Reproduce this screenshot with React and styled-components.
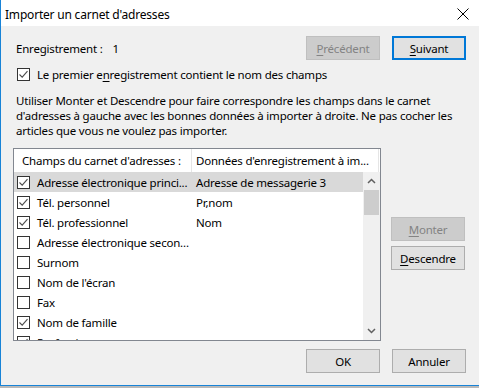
import React from "react";
import styled, { createGlobalStyle } from "styled-components";

const GlobalStyle = createGlobalStyle`
  html, body {
    margin: 0;
    padding: 0;
    background: #c8c8c8;
  }
  body {
    font-family: "Noto Sans", "Open Sans", sans-serif;
    font-size: 11.5px;
    letter-spacing: -0.2px;
    color: #000;
  }
`;

const fields = [
  { name: "Adresse électronique princi...", value: "Adresse de messagerie 3", checked: true, selected: true },
  { name: "Tél. personnel", value: "Pr,nom", checked: true },
  { name: "Tél. professionnel", value: "Nom", checked: true },
  { name: "Adresse électronique secon...", value: "", checked: false },
  { name: "Surnom", value: "", checked: false },
  { name: "Nom de l'écran", value: "", checked: false },
  { name: "Fax", value: "", checked: false },
  { name: "Nom de famille", value: "", checked: true },
  { name: "Profession", value: "", checked: true },
];

const CheckBox = ({ checked }) => (
  <Box>
    {checked && (
      <svg width="11" height="11" viewBox="0 0 11 11">
        <polyline points="1.5,5.5 4.2,8.2 9.5,2.2" fill="none" stroke="#4d4d4d" strokeWidth="1.1" />
      </svg>
    )}
  </Box>
);

const App = () => {
  return (
    <>
      <GlobalStyle />
      <Window>
        <TitleBar>
          <Title>Importer un carnet d'adresses</Title>
          <CloseIcon width="12" height="12" viewBox="0 0 12 12">
            <line x1="0.5" y1="0.5" x2="11.5" y2="11.5" stroke="#000" strokeWidth="1" />
            <line x1="11.5" y1="0.5" x2="0.5" y2="11.5" stroke="#000" strokeWidth="1" />
          </CloseIcon>
        </TitleBar>
        <Body>
          <TopRow>
            <RecordLabel>
              Enregistrement :<RecordNum>1</RecordNum>
            </RecordLabel>
            <ButtonGroup>
              <Button disabled>
                <u>P</u>récédent
              </Button>
              <Button $default>
                <u>S</u>uivant
              </Button>
            </ButtonGroup>
          </TopRow>

          <CheckRow>
            <CheckBox checked />
            <span>
              Le premier e<u>n</u>registrement contient le nom des champs
            </span>
          </CheckRow>

          <Info>
            Utiliser Monter et Descendre pour faire correspondre les champs dans le carnet
            <br />
            d'adresses à gauche avec les bonnes données à importer à droite. Ne pas cocher les
            <br />
            articles que vous ne voulez pas importer.
          </Info>

          <Middle>
            <ListBox>
              <Header>
                <HeaderCell $width={178}>Champs du carnet d'adresses :</HeaderCell>
                <HeaderCell $width={187}>Données d'enregistrement à im...</HeaderCell>
              </Header>
              <ListBody>
                <Rows>
                  {fields.map((f) => (
                    <Row key={f.name} $selected={f.selected}>
                      <NameCell>
                        <CheckBox checked={f.checked} />
                        <span>{f.name}</span>
                      </NameCell>
                      <ValueCell>{f.value}</ValueCell>
                    </Row>
                  ))}
                </Rows>
                <ScrollBar>
                  <Arrow width="9" height="6" viewBox="0 0 9 6">
                    <polyline points="1,5 4.5,1.5 8,5" fill="none" stroke="#606060" strokeWidth="1.5" />
                  </Arrow>
                  <Thumb />
                  <Track />
                  <Arrow width="9" height="6" viewBox="0 0 9 6">
                    <polyline points="1,1 4.5,4.5 8,1" fill="none" stroke="#606060" strokeWidth="1.5" />
                  </Arrow>
                </ScrollBar>
              </ListBody>
            </ListBox>
            <SideButtons>
              <Button disabled>
                <u>M</u>onter
              </Button>
              <Button>
                <u>D</u>escendre
              </Button>
            </SideButtons>
          </Middle>

          <Footer>
            <Button>OK</Button>
            <Button>Annuler</Button>
          </Footer>
        </Body>
      </Window>
      <Desktop />
    </>
  );
};

const Window = styled.div`
  width: 478px;
  height: 385px;
  border-left: 1px solid #1883d7;
  border-bottom: 1px solid #1883d7;
  display: flex;
  flex-direction: column;
  background: #f0f0f0;
  overflow: hidden;
`;

const Desktop = styled.div`
  height: 2px;
  background: #b9b9b9;
`;

const TitleBar = styled.div`
  height: 26px;
  flex-shrink: 0;
  background: #fff;
  display: flex;
  align-items: center;
  justify-content: space-between;
  padding: 0 10px 0 4px;
`;

const Title = styled.span`
  font-size: 12px;
  padding-top: 2px;
`;

const CloseIcon = styled.svg`
  display: block;
  margin-top: 2px;
`;

const Body = styled.div`
  flex: 1;
  display: flex;
  flex-direction: column;
  padding: 10px 13px 0 12px;
`;

const TopRow = styled.div`
  display: flex;
  align-items: center;
  justify-content: space-between;
  height: 24px;
`;

const RecordLabel = styled.span`
  margin-left: 3px;
`;

const RecordNum = styled.span`
  margin-left: 10px;
`;

const ButtonGroup = styled.div`
  display: flex;
  gap: 12px;
`;

const Button = styled.button`
  width: 74px;
  height: 24px;
  box-sizing: border-box;
  font-family: inherit;
  font-size: 11.5px;
  letter-spacing: -0.2px;
  padding: 0;
  color: ${(p) => (p.disabled ? "#838383" : "#000")};
  background: ${(p) => (p.disabled ? "#cccccc" : "#e1e1e1")};
  border: ${(p) =>
    p.$default ? "2px solid #0078d7" : p.disabled ? "1px solid #bfbfbf" : "1px solid #adadad"};
  u {
    text-underline-offset: 2px;
  }
`;

const CheckRow = styled.label`
  display: flex;
  align-items: center;
  gap: 7px;
  margin-top: 7px;
  margin-left: 4px;
  height: 14px;
  u {
    text-underline-offset: 2px;
  }
`;

const Box = styled.span`
  width: 13px;
  height: 13px;
  box-sizing: border-box;
  border: 1px solid #333;
  background: #fff;
  flex-shrink: 0;
  display: flex;
  align-items: center;
  justify-content: center;
`;

const Info = styled.p`
  margin: 12px 0 0 3px;
  line-height: 15px;
  white-space: nowrap;
`;

const Middle = styled.div`
  display: flex;
  gap: 10px;
  margin-top: 10px;
`;

const ListBox = styled.div`
  width: 368px;
  height: 193px;
  box-sizing: border-box;
  border: 1px solid #828790;
  background: #fff;
  display: flex;
  flex-direction: column;
  overflow: hidden;
`;

const Header = styled.div`
  height: 23px;
  flex-shrink: 0;
  display: flex;
`;

const HeaderCell = styled.div`
  width: ${(p) => p.$width}px;
  box-sizing: border-box;
  border-right: 1px solid #e5e5e5;
  padding-left: ${(p) => (p.$width > 180 ? 4 : 8)}px;
  display: flex;
  align-items: center;
  white-space: nowrap;
`;

const ListBody = styled.div`
  flex: 1;
  display: flex;
  min-height: 0;
`;

const Rows = styled.div`
  flex: 1;
  overflow: hidden;
`;

const Row = styled.div`
  height: 20px;
  display: flex;
  align-items: center;
  background: ${(p) => (p.$selected ? "#d9d9d9" : "transparent")};
`;

const NameCell = styled.div`
  width: 178px;
  display: flex;
  align-items: center;
  gap: 7px;
  padding-left: 3px;
  box-sizing: border-box;
  white-space: nowrap;
`;

const ValueCell = styled.div`
  padding-left: 4px;
  white-space: nowrap;
`;

const ScrollBar = styled.div`
  width: 17px;
  background: #f0f0f0;
  display: flex;
  flex-direction: column;
  align-items: center;
`;

const Arrow = styled.svg`
  display: block;
  margin: 6px 0;
`;

const Thumb = styled.div`
  width: 15px;
  height: 25px;
  background: #cdcdcd;
`;

const Track = styled.div`
  flex: 1;
`;

const SideButtons = styled.div`
  display: flex;
  flex-direction: column;
  gap: 5px;
  padding-top: 69px;
`;

const Footer = styled.div`
  display: flex;
  justify-content: flex-end;
  gap: 12px;
  margin-top: 8px;
`;

export default App;
